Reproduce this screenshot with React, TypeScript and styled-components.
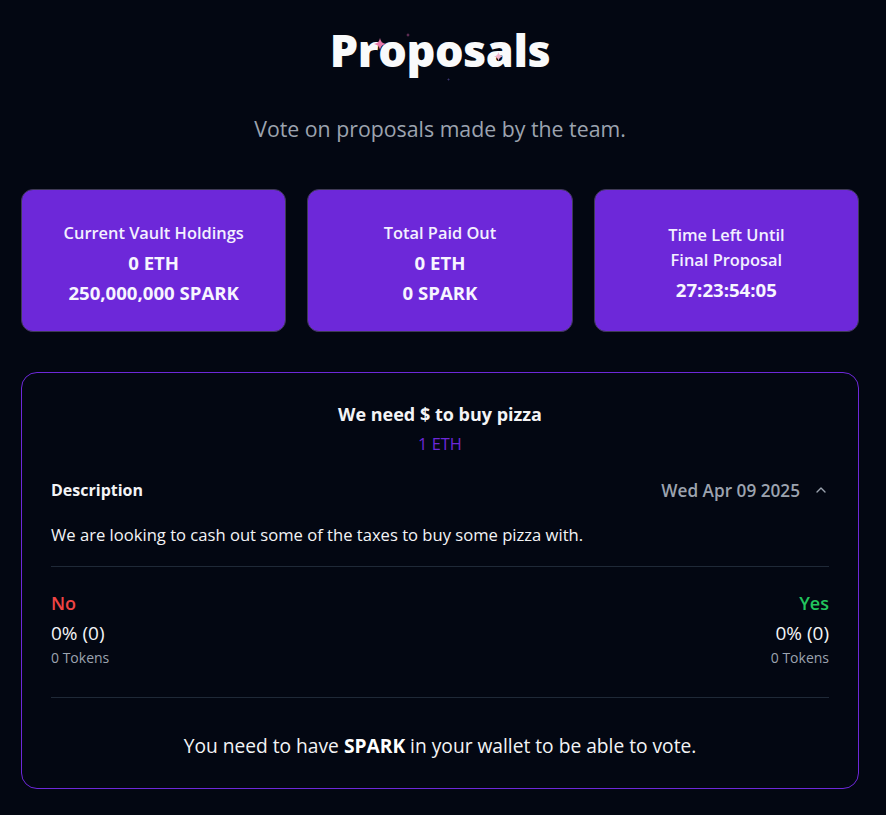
import React from "react";
import styled, { createGlobalStyle } from "styled-components";

const Global = createGlobalStyle`
  html, body { margin: 0; padding: 0; background: #030712; }
  body { font-family: "Open Sans", "Noto Sans", sans-serif; color: #f9fafb; }
`;

const Page = styled.main`
  width: 838px;
  margin-left: 21px;
  padding-top: 20px;
  padding-bottom: 26px;
  display: flex;
  flex-direction: column;
  align-items: center;
`;

const TitleWrap = styled.div`
  position: relative;
`;

const Title = styled.h1`
  margin: 0;
  font-size: 45px;
  line-height: 60px;
  font-weight: 800;
  color: #f9fafb;
  letter-spacing: -0.5px;
`;

const Sparkle = styled.svg<{ $x: number; $y: number }>`
  position: absolute;
  left: ${(p) => p.$x}px;
  top: ${(p) => p.$y}px;
  pointer-events: none;
`;

const Subtitle = styled.p`
  margin: 35px 0 0;
  font-size: 21.3px;
  line-height: 28px;
  color: #9ca3af;
`;

const Stats = styled.section`
  margin-top: 46px;
  width: 100%;
  display: grid;
  grid-template-columns: repeat(3, 1fr);
  gap: 21px;
`;

const StatCard = styled.div`
  height: 143px;
  box-sizing: border-box;
  background: #6d28d9;
  border: 1px solid #3f3a55;
  border-radius: 12px;
  display: flex;
  flex-direction: column;
  align-items: center;
  justify-content: center;
  text-align: center;
  padding-top: 6px;
`;

const StatLabel = styled.div`
  font-size: 16.4px;
  line-height: 25px;
  font-weight: 600;
  color: #f3f0ff;
  margin-bottom: 3px;
`;

const StatValue = styled.div`
  font-size: 18.6px;
  line-height: 30px;
  font-weight: 700;
  color: #f7f5ff;
`;

const Proposal = styled.article`
  margin-top: 40px;
  width: 100%;
  box-sizing: border-box;
  border: 1px solid #6d28d9;
  border-radius: 16px;
  padding: 26px 29px 28px;
  display: flex;
  flex-direction: column;
`;

const PTitle = styled.h2`
  margin: 0;
  text-align: center;
  font-size: 18px;
  line-height: 30px;
  font-weight: 700;
  color: #f3f4f6;
`;

const PAmount = styled.div`
  text-align: center;
  font-size: 16.4px;
  line-height: 30px;
  color: #6d28d9;
`;

const DescHead = styled.div`
  margin-top: 16px;
  display: flex;
  justify-content: space-between;
  align-items: center;
  height: 30px;
`;

const DescLabel = styled.div`
  font-size: 16px;
  font-weight: 700;
  color: #f3f4f6;
`;

const DateRow = styled.div`
  display: flex;
  align-items: center;
  gap: 13px;
  font-size: 17.2px;
  font-weight: 600;
  color: #9ca3af;
`;

const DescText = styled.p`
  margin: 15px 0 0;
  font-size: 16.6px;
  line-height: 30px;
  color: #f3f4f6;
`;

const Divider = styled.hr<{ $top?: number }>`
  margin: ${(p) => p.$top ?? 0}px 0 0;
  border: 0;
  border-top: 1px solid #1f2937;
`;

const Votes = styled.div`
  display: flex;
  justify-content: space-between;
  padding: 22px 0 30px;
`;

const VoteCol = styled.div<{ $align: "left" | "right" }>`
  display: flex;
  flex-direction: column;
  align-items: ${(p) => (p.$align === "left" ? "flex-start" : "flex-end")};
`;

const VoteLabel = styled.div<{ $color: string }>`
  font-size: 18px;
  line-height: 28px;
  font-weight: 600;
  color: ${(p) => p.$color};
`;

const VotePct = styled.div`
  font-size: 19px;
  line-height: 32px;
  color: #f3f4f6;
`;

const VoteTokens = styled.div`
  font-size: 14px;
  line-height: 18px;
  color: #9ca3af;
`;

const Footer = styled.p`
  margin: 34px 0 0;
  text-align: center;
  font-size: 19.2px;
  line-height: 28px;
  color: #f3f4f6;
  & strong { font-weight: 700; color: #fff; }
`;

const Star = ({ x, y, size, color }: { x: number; y: number; size: number; color: string }) => (
  <Sparkle $x={x} $y={y} width={size} height={size} viewBox="0 0 10 10">
    <path d="M5 0 Q5.6 4.4 10 5 Q5.6 5.6 5 10 Q4.4 5.6 0 5 Q4.4 4.4 5 0Z" fill={color} />
  </Sparkle>
);

export default function App() {
  return (
    <>
      <Global />
      <Page>
        <TitleWrap>
          <Title>Proposals</Title>
          <Star x={44} y={18} size={12} color="#e879a9" />
          <Star x={76} y={13} size={4} color="#7c3a6a" />
          <Star x={164} y={32} size={9} color="#f0b3cc" />
          <Star x={117} y={58} size={3} color="#3b3570" />
        </TitleWrap>
        <Subtitle>Vote on proposals made by the team.</Subtitle>
        <Stats>
          <StatCard>
            <StatLabel>Current Vault Holdings</StatLabel>
            <StatValue>0 ETH</StatValue>
            <StatValue>250,000,000 SPARK</StatValue>
          </StatCard>
          <StatCard>
            <StatLabel>Total Paid Out</StatLabel>
            <StatValue>0 ETH</StatValue>
            <StatValue>0 SPARK</StatValue>
          </StatCard>
          <StatCard>
            <StatLabel>
              Time Left Until
              <br />
              Final Proposal
            </StatLabel>
            <StatValue>27:23:54:05</StatValue>
          </StatCard>
        </Stats>
        <Proposal>
          <PTitle>We need $ to buy pizza</PTitle>
          <PAmount>1 ETH</PAmount>
          <DescHead>
            <DescLabel>Description</DescLabel>
            <DateRow>
              Wed Apr 09 2025
              <svg width="16" height="16" viewBox="0 0 24 24" fill="none" stroke="#9ca3af" strokeWidth="2" strokeLinecap="round" strokeLinejoin="round">
                <path d="m18 15-6-6-6 6" />
              </svg>
            </DateRow>
          </DescHead>
          <DescText>We are looking to cash out some of the taxes to buy some pizza with.</DescText>
          <Divider $top={16} />
          <Votes>
            <VoteCol $align="left">
              <VoteLabel $color="#ef4444">No</VoteLabel>
              <VotePct>0% (0)</VotePct>
              <VoteTokens>0 Tokens</VoteTokens>
            </VoteCol>
            <VoteCol $align="right">
              <VoteLabel $color="#22c55e">Yes</VoteLabel>
              <VotePct>0% (0)</VotePct>
              <VoteTokens>0 Tokens</VoteTokens>
            </VoteCol>
          </Votes>
          <Divider />
          <Footer>
            You need to have <strong>SPARK</strong> in your wallet to be able to vote.
          </Footer>
        </Proposal>
      </Page>
    </>
  );
}
